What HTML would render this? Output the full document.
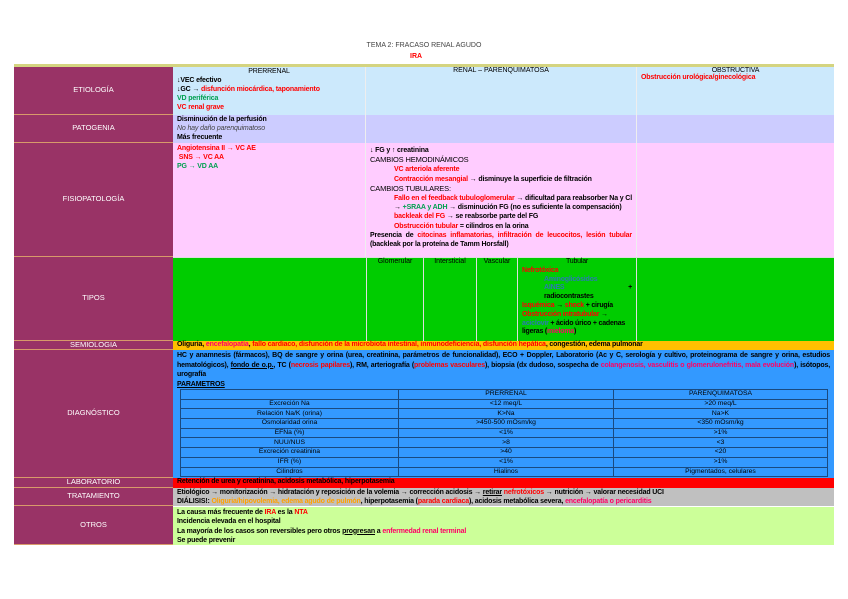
<!DOCTYPE html>
<html><head><meta charset="utf-8"><style>
*{margin:0;padding:0;box-sizing:border-box}
body{width:848px;height:599px;background:#fff;font-family:"Liberation Sans",sans-serif;position:relative;overflow:hidden;font-size:7px;line-height:8.4px;color:#000}
.a{position:absolute}
.h{background:#993366;color:#fff;font-size:7.5px;display:flex;align-items:center;justify-content:center;left:14px;width:159px;border-bottom:1px solid #d89a6a}
.r{color:#f00}.g{color:#00a050}.pk{color:#ff0066}.or{color:#ffa000}.bl{color:#2a7ab0}
.c{padding:1px 4px;font-weight:bold;letter-spacing:-0.15px}
table{border-collapse:collapse;font-size:6.8px}
td{border:1px solid #1a4a80;text-align:center;height:9.7px;line-height:8px;padding:0}
</style></head><body>
<div class="a" style="left:0;width:848px;top:42px;text-align:center;font-size:7px;color:#444">TEMA 2: FRACASO RENAL AGUDO</div>
<div class="a r" style="left:410px;top:53px;font-size:7px;font-weight:bold">IRA</div>
<div class="a" style="left:14px;top:64px;width:820px;height:3px;background:#d4d480"></div>

<div class="a h" style="top:67px;height:48px">ETIOLOGÍA</div>
<div class="a h" style="top:115px;height:28px">PATOGENIA</div>
<div class="a h" style="top:143px;height:114px">FISIOPATOLOGÍA</div>
<div class="a h" style="top:257px;height:84px">TIPOS</div>
<div class="a h" style="top:341px;height:9px">SEMIOLOGIA</div>
<div class="a h" style="top:350px;height:128px">DIAGNÓSTICO</div>
<div class="a h" style="top:478px;height:10px">LABORATORIO</div>
<div class="a h" style="top:488px;height:18px">TRATAMIENTO</div>
<div class="a h" style="top:506px;height:39px">OTROS</div>

<div class="a c" style="left:173px;top:67px;width:193px;height:48px;background:#cce9fc;border-right:1px solid #eee;line-height:9px;padding-top:0">
<div style="text-align:center;font-weight:normal">PRERRENAL</div>
↓VEC efectivo<br>↓GC → <span class="r">disfunción miocárdica, taponamiento</span><br><span class="g">VD periférica</span><br><span class="r">VC renal grave</span></div>
<div class="a" style="left:366px;top:67px;width:271px;height:48px;background:#cce9fc;border-right:1px solid #eee;text-align:center;font-size:7px">RENAL – PARENQUIMATOSA</div>
<div class="a c" style="left:637px;top:67px;width:197px;height:48px;background:#cce9fc;padding-top:0">
<div style="text-align:center;font-weight:normal;line-height:7px">OBSTRUCTIVA</div><span class="r">Obstrucción urológica/ginecológica</span></div>
<div class="a c" style="left:173px;top:115px;width:193px;height:28px;background:#ccccff;border-right:1px solid #eee;line-height:9px;padding-top:0">Disminución de la perfusión<br><i style="color:#444;font-weight:normal">No hay daño parenquimatoso</i><br>Más frecuente</div>
<div class="a" style="left:366px;top:115px;width:271px;height:28px;background:#ccccff;border-right:1px solid #eee"></div>
<div class="a" style="left:637px;top:115px;width:197px;height:28px;background:#ccccff"></div>
<div class="a c" style="left:173px;top:143px;width:193px;height:114px;background:#ffccff;border-right:1px solid #eee;line-height:9px"><span class="r">Angiotensina II → VC AE</span><br><span class="r">&nbsp;SNS → VC AA</span><br><span class="g">PG → VD AA</span></div>
<div class="a c" style="left:366px;top:143px;width:271px;height:114px;background:#ffccff;border-right:1px solid #eee;line-height:9.2px;padding-top:3px">
↓ FG y ↑ creatinina<br><span style="font-weight:normal;font-size:7.5px">CAMBIOS HEMODINÁMICOS</span><br>
<div style="padding-left:24px"><span class="r">VC arteriola aferente</span><br><span class="r">Contracción mesangial</span> → disminuye la superficie de filtración</div>
<span style="font-weight:normal;font-size:7.5px">CAMBIOS TUBULARES:</span>
<div style="padding-left:24px;text-align:justify"><span class="r">Fallo en el feedback tubuloglomerular</span> → dificultad para reabsorber Na y Cl → <span class="g">+SRAA y ADH</span> → disminución FG (no es suficiente la compensación)<br><span class="r">backleak del FG</span> → se reabsorbe parte del FG<br><span class="r">Obstrucción tubular</span> = cilindros en la orina</div>
<div style="text-align:justify">Presencia de <span class="r">citocinas inflamatorias, infiltración de leucocitos, lesión tubular</span> (backleak por la proteína de Tamm Horsfall)</div></div>
<div class="a" style="left:637px;top:143px;width:197px;height:114px;background:#ffccff"></div>
<div class="a" style="left:173px;top:257px;width:661px;height:84px;background:#00cc00;border-top:1px solid #ddd"></div>
<div class="a" style="left:366px;top:258px;width:58px;height:83px;border-left:1px solid #ddd;border-right:1px solid #ddd;text-align:center">Glomerular</div>
<div class="a" style="left:424px;top:258px;width:53px;height:83px;border-right:1px solid #ddd;text-align:center">Intersticial</div>
<div class="a" style="left:477px;top:258px;width:41px;height:83px;border-right:1px solid #ddd;text-align:center">Vascular</div>
<div class="a" style="left:518px;top:258px;width:119px;height:83px;border-right:1px solid #ddd;padding:0 4px;line-height:8.8px;font-weight:bold;letter-spacing:-0.2px">
<div style="text-align:center;font-weight:normal">Tubular</div><span class="r">Nefrotóxica</span><br>
<div style="padding-left:22px" class="bl">Aminoglicósidos<br>AINES <span style="color:#000;float:right">+</span><br><span style="color:#000">radiocontrastes</span></div>
<span class="r">Isquémica</span> → <span class="r">shock</span> + cirugía<br><span class="r">Obstrucción intratubular</span> →<br><span class="bl">aciclovir</span> + ácido úrico + cadenas ligeras (<span class="pk">mieloma</span>)</div>
<div class="a c" style="left:173px;top:341px;width:661px;height:9px;background:#ffc000;line-height:8px;padding-top:0">Oliguria, <span class="pk">encefalopatía</span>, <span class="r">fallo cardiaco, disfunción de la microbiota intestinal, inmunodeficiencia, disfunción hepática</span>, congestión, edema pulmonar</div>
<div class="a c" style="left:173px;top:350px;width:661px;height:128px;background:#3399ff;line-height:9.5px;text-align:justify">HC y anamnesis (fármacos), BQ de sangre y orina (urea, creatinina, parámetros de funcionalidad), ECO + Doppler, Laboratorio (Ac y C, serología y cultivo, proteinograma de sangre y orina, estudios hematológicos), <u>fondo de o.p.</u>, TC (<span class="r">necrosis papilares</span>), RM, arteriografía (<span class="r">problemas vasculares</span>), biopsia (dx dudoso, sospecha de <span class="pk">colangenosis, vasculitis o glomerulonefritis, mala evolución</span>), isótopos, urografía<br><u>PARAMETROS</u></div>
<table class="a" style="left:180px;top:389px;width:648px">
<tr><td style="width:218px"></td><td style="width:215px">PRERRENAL</td><td>PARENQUIMATOSA</td></tr>
<tr><td>Excreción Na</td><td>&lt;12 meq/L</td><td>&gt;20 meq/L</td></tr>
<tr><td>Relación Na/K (orina)</td><td>K&gt;Na</td><td>Na&gt;K</td></tr>
<tr><td>Osmolaridad orina</td><td>&gt;450-500 mOsm/kg</td><td>&lt;350 mOsm/kg</td></tr>
<tr><td>EFNa (%)</td><td>&lt;1%</td><td>&gt;1%</td></tr>
<tr><td>NUU/NUS</td><td>&gt;8</td><td>&lt;3</td></tr>
<tr><td>Excreción creatinina</td><td>&gt;40</td><td>&lt;20</td></tr>
<tr><td>IFR (%)</td><td>&lt;1%</td><td>&gt;1%</td></tr>
<tr><td>Cilindros</td><td>Hialinos</td><td>Pigmentados, celulares</td></tr>
</table>
<div class="a c" style="left:173px;top:478px;width:661px;height:10px;background:#ff0000;padding-top:0">Retención de urea y creatinina, acidosis metabólica, hiperpotasemia</div>
<div class="a c" style="left:173px;top:488px;width:661px;height:18px;background:#c0c0c0;padding-top:0;line-height:9px">Etiológico → monitorización → hidratación y reposición de la volemia → corrección acidosis → <u>retirar</u> <span class="r">nefrotóxicos</span> → nutrición → valorar necesidad UCI<br>DIÁLISIS!: <span class="or">Oliguria/hipovolemia, edema agudo de pulmón</span>, hiperpotasemia (<span class="r">parada cardiaca</span>), acidosis metabólica severa, <span class="pk">encefalopatía o pericarditis</span></div>
<div class="a c" style="left:173px;top:506px;width:661px;height:39px;background:#ccff99;border-top:1px solid #fff;line-height:9.3px">La causa más frecuente de <span class="r">IRA</span> es la <span class="r">NTA</span><br>Incidencia elevada en el hospital<br>La mayoría de los casos son reversibles pero otros <u>progresan</u> a <span class="pk">enfermedad renal terminal</span><br>Se puede prevenir</div>
</body></html>
